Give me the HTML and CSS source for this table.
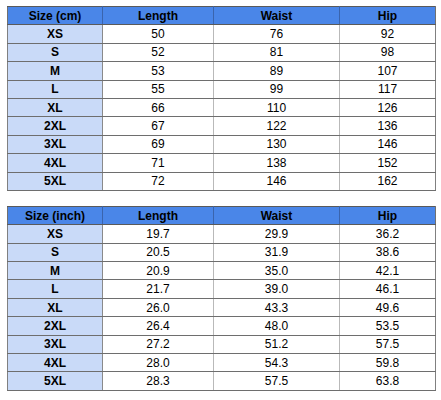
FILE: index.html
```html
<!DOCTYPE html>
<html>
<head>
<meta charset="utf-8">
<link rel="stylesheet" href="styles.css">
</head>
<body>
<div class="page">
<table class="sz">
<colgroup><col class="c1"><col class="c2"><col class="c3"><col class="c4"></colgroup>
<thead><tr><th>Size (cm)</th><th>Length</th><th>Waist</th><th>Hip</th></tr></thead>
<tbody>
<tr><td class="k">XS</td><td>50</td><td>76</td><td>92</td></tr>
<tr><td class="k">S</td><td>52</td><td>81</td><td>98</td></tr>
<tr><td class="k">M</td><td>53</td><td>89</td><td>107</td></tr>
<tr><td class="k">L</td><td>55</td><td>99</td><td>117</td></tr>
<tr><td class="k">XL</td><td>66</td><td>110</td><td>126</td></tr>
<tr><td class="k">2XL</td><td>67</td><td>122</td><td>136</td></tr>
<tr><td class="k">3XL</td><td>69</td><td>130</td><td>146</td></tr>
<tr><td class="k">4XL</td><td>71</td><td>138</td><td>152</td></tr>
<tr><td class="k">5XL</td><td>72</td><td>146</td><td>162</td></tr>
</tbody>
</table>
<table class="sz">
<colgroup><col class="c1"><col class="c2"><col class="c3"><col class="c4"></colgroup>
<thead><tr><th>Size (inch)</th><th>Length</th><th>Waist</th><th>Hip</th></tr></thead>
<tbody>
<tr><td class="k">XS</td><td>19.7</td><td>29.9</td><td>36.2</td></tr>
<tr><td class="k">S</td><td>20.5</td><td>31.9</td><td>38.6</td></tr>
<tr><td class="k">M</td><td>20.9</td><td>35.0</td><td>42.1</td></tr>
<tr><td class="k">L</td><td>21.7</td><td>39.0</td><td>46.1</td></tr>
<tr><td class="k">XL</td><td>26.0</td><td>43.3</td><td>49.6</td></tr>
<tr><td class="k">2XL</td><td>26.4</td><td>48.0</td><td>53.5</td></tr>
<tr><td class="k">3XL</td><td>27.2</td><td>51.2</td><td>57.5</td></tr>
<tr><td class="k">4XL</td><td>28.0</td><td>54.3</td><td>59.8</td></tr>
<tr><td class="k">5XL</td><td>28.3</td><td>57.5</td><td>63.8</td></tr>
</tbody>
</table>
</div>
</body>
</html>
```
FILE: styles.css
```css
html, body { margin: 0; padding: 0; background: #fff; }
.page {
  padding: 6px 0 0 7px;
  display: flex;
  flex-direction: column;
  gap: 15px;
  font-family: "Liberation Sans", Arial, sans-serif;
  font-size: 12px;
  color: #000;
}
.sz {
  border-collapse: collapse;
  table-layout: fixed;
  width: 428px;
}
.c1 { width: 95px; }
.c2 { width: 111px; }
.c3 { width: 126px; }
.c4 { width: 96px; }
.sz th, .sz td {
  height: 17.4px;
  padding: 0 2px;
  text-align: center;
  line-height: 14px;
  border-left: 1px solid #b9b9b9;
  border-right: 1px solid #b9b9b9;
  border-bottom: 1px solid #6e6e6e;
}
.sz th {
  background: #4a86e8;
  font-weight: bold;
  border-top: 1px solid #5a5a5a;
  border-left: 1px solid #3a64ad;
  border-right: 1px solid #3a64ad;
  border-bottom: 1px solid #5a5a5a;
}
.sz th:first-child { border-left-color: #707070; }
.sz th:last-child { border-right-color: #707070; }
.sz td:first-child { border-left: 1px solid #808080; }
.sz td:last-child { border-right: 1px solid #808080; }
.sz td.k {
  background: #c9daf8;
  font-weight: bold;
  border-right: 1px solid #8a8a8a;
}
```
